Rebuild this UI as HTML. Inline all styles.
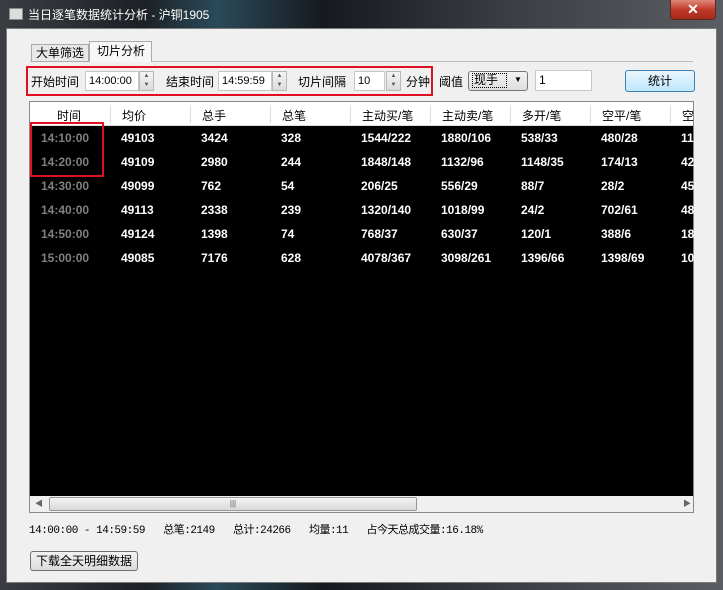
<!DOCTYPE html>
<html><head><meta charset="utf-8"><style>
*{margin:0;padding:0;box-sizing:border-box}
body{width:723px;height:590px;overflow:hidden;background:#1a1d22;font-family:"Liberation Sans","Noto Sans CJK SC",sans-serif;font-size:12px;position:relative}
.a{position:absolute}
.frame{left:0;top:0;width:723px;height:590px;background:linear-gradient(90deg,#3a3d42 0%,#1d2126 20%,#2a4a5a 30%,#16191d 45%,#3a3e44 70%,#5a5d62 100%)}
.client{left:6px;top:28px;width:711px;height:555px;background:#f0f0f0;border:1px solid #7a7a7a}
.t{white-space:nowrap;color:#000}
.close{left:670px;top:0;width:46px;height:20px;background:linear-gradient(#e08a7a,#c0392b 50%,#a52a1c);border:1px solid #5a2a22;border-top:none;border-radius:0 0 4px 4px;color:#fff;font-weight:bold;text-align:center;font-size:14px;line-height:18px}
.inp{background:#fff;border:1px solid #c8c8c8;height:20px;font-family:"Liberation Sans",sans-serif;font-size:11px;line-height:18px;padding-left:3px;overflow:hidden;white-space:nowrap}
.spin{width:15px;height:20px;border:1px solid #b8b8b8;background:linear-gradient(#f4f4f4,#dcdcdc);font-size:6px;color:#557;text-align:center;line-height:9px}
.hd{top:102px;height:24px;background:#fff;border-bottom:1px solid #ddd;line-height:24px;color:#000}
.cell{color:#fff;font-weight:bold;font-size:12px}
</style></head><body>
<div class="a frame"></div>
<div class="a" style="left:9px;top:8px;width:14px;height:12px;background:#ddd;border:1px solid #888"></div>
<div class="a t" style="left:28px;top:6px;color:#fff;font-size:12px">当日逐笔数据统计分析 - 沪铜1905</div>
<div class="a close">✕</div>
<div class="a client"></div>
<div class="a" style="left:30px;top:61px;width:663px;height:1px;background:#bbb"></div>
<div class="a t" style="left:31px;top:44px;width:58px;height:18px;border:1px solid #aaa;background:#e8e8e8;padding-left:4px;line-height:16px;font-size:12px">大单筛选</div>
<div class="a t" style="left:89px;top:41px;width:63px;height:21px;border:1px solid #aaa;border-bottom:none;background:#f7f7f7;padding-left:7px;line-height:19px;font-size:12px">切片分析</div>
<div class="a" style="left:26px;top:66px;width:407px;height:30px;border:2px solid #e01020"></div>
<div class="a t" style="left:31px;top:73px">开始时间</div>
<div class="a inp" style="left:85px;top:71px;width:54px">14:00:00</div>
<div class="a spin" style="left:139px;top:71px">▲<br>▼</div>
<div class="a t" style="left:166px;top:73px">结束时间</div>
<div class="a inp" style="left:218px;top:71px;width:54px">14:59:59</div>
<div class="a spin" style="left:272px;top:71px">▲<br>▼</div>
<div class="a t" style="left:298px;top:73px">切片间隔</div>
<div class="a inp" style="left:354px;top:71px;width:31px">10</div>
<div class="a spin" style="left:386px;top:71px">▲<br>▼</div>
<div class="a t" style="left:406px;top:73px">分钟</div>
<div class="a t" style="left:439px;top:73px">阈值</div>
<div class="a" style="left:468px;top:71px;width:60px;height:20px;border:1px solid #777;border-radius:3px;background:linear-gradient(#f4f4f4,#ddd)"></div>
<div class="a t" style="left:472px;top:73px;border:1px dotted #000;line-height:13px;padding:0 1px">现手&nbsp;&nbsp;</div>
<div class="a t" style="left:514px;top:75px;font-size:8px">▼</div>
<div class="a inp" style="left:535px;top:70px;width:57px;height:21px;font-size:12px">1</div>
<div class="a t" style="left:625px;top:70px;width:70px;height:22px;border:1px solid #3c7fb1;border-radius:3px;background:linear-gradient(#eaf6fd,#bee6fd);text-align:center;line-height:20px">统计</div>
<div class="a" style="left:29px;top:101px;width:665px;height:412px;border:1px solid #888;background:#000"></div>
<div class="a hd" style="left:30px;width:663px"></div>
<div class="a" style="left:30px;top:126px;width:663px;height:370px;background:#000"></div>
<div id="h"></div>
<div class="a" style="left:30px;top:496px;width:663px;height:16px;background:#f0f0f0"></div>
<div class="a" style="left:49px;top:497px;width:368px;height:14px;border:1px solid #999;border-radius:2px;background:linear-gradient(#f4f4f4,#d8d8d8);text-align:center;font-size:8px;line-height:12px;color:#555">|||</div>
<div class="a t" style="left:35px;top:498px;font-size:8px;color:#666">◀</div>
<div class="a t" style="left:683px;top:498px;font-size:8px;color:#666">▶</div>
<div class="a" style="left:30px;top:122px;width:74px;height:55px;border:2px solid #e01020"></div>
<div class="a t" style="left:29px;top:521px;font-size:11px;font-family:'Liberation Mono','Noto Sans CJK SC',monospace;white-space:pre;letter-spacing:-0.5px">14:00:00 - 14:59:59   总笔:2149   总计:24266   均量:11   占今天总成交量:16.18%</div>
<div class="a t" style="left:30px;top:551px;width:108px;height:20px;border:1px solid #707070;border-radius:3px;background:linear-gradient(#f2f2f2,#dcdcdc);text-align:center;line-height:18px">下载全天明细数据</div>
<script>
var cols=[30,110,190,270,350,430,510,590,670];
var hd=["时间","均价","总手","总笔","主动买/笔","主动卖/笔","多开/笔","空平/笔","空"];
var rows=[["14:10:00","49103","3424","328","1544/222","1880/106","538/33","480/28","11"],
["14:20:00","49109","2980","244","1848/148","1132/96","1148/35","174/13","42"],
["14:30:00","49099","762","54","206/25","556/29","88/7","28/2","45"],
["14:40:00","49113","2338","239","1320/140","1018/99","24/2","702/61","48"],
["14:50:00","49124","1398","74","768/37","630/37","120/1","388/6","18"],
["15:00:00","49085","7176","628","4078/367","3098/261","1396/66","1398/69","10"]];
var s="";
for(var i=0;i<9;i++){
 var l=i==0?57:cols[i]+12;
 s+='<div class="a t" style="left:'+l+'px;top:107px">'+hd[i]+'</div>';
 if(i>0)s+='<div class="a" style="left:'+cols[i]+'px;top:105px;width:1px;height:18px;background:#ddd"></div>';
 for(var r=0;r<6;r++){
  var tl=i==0?41:cols[i]+11;
  s+='<div class="a cell" style="left:'+tl+'px;top:'+(131+r*24)+'px;'+(i==0?'color:#808080;':'')+(i==8?'width:23px;overflow:hidden;':'')+'">'+rows[r][i]+'</div>';
 }
}
document.getElementById("h").innerHTML=s;
</script>
</body></html>
